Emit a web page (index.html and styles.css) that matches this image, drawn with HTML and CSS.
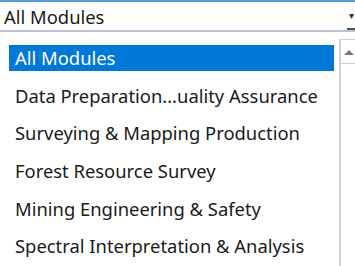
FILE: index.html
```html
<!DOCTYPE html>
<html lang="en">
  <head>
    <meta charset="UTF-8" />
    <title>Module select</title>
    <link rel="stylesheet" href="styles.css">
  </head>
  <body>
    <div class="combo">
      <span class="combo-text">All Modules</span>
      <span class="combo-arrow">&#9662;</span>
    </div>
    <div class="dropdown">
      <ul class="items">
        <li class="item selected"><span>All Modules</span></li>
        <li class="item"><span>Data Preparation...uality Assurance</span></li>
        <li class="item"><span>Surveying &amp; Mapping Production</span></li>
        <li class="item"><span>Forest Resource Survey</span></li>
        <li class="item"><span>Mining Engineering &amp; Safety</span></li>
        <li class="item"><span>Spectral Interpretation &amp; Analysis</span></li>
      </ul>
      <div class="scrollbar">
        <div class="scroll-up">
          <svg width="10" height="6" viewBox="0 0 10 6"><polygon points="0,6 5,1 10,6" fill="#7a7a7a" /></svg>
        </div>
      </div>
    </div>
  </body>
</html>
```

FILE: styles.css
```css
* {
  margin: 0;
  padding: 0;
  box-sizing: border-box;
}
body {
  width: 355px;
  height: 266px;
  overflow: hidden;
  background: #fff;
  font-family: "Noto Sans", "Open Sans", sans-serif;
  font-size: 18.4px;
  color: #1a1a1a;
}
ul {
  list-style: none;
}
.combo {
  height: 32px;
  border-top: 2px solid #5a9be0;
  border-bottom: 2px solid #b9c4d0;
  display: flex;
  align-items: center;
  justify-content: space-between;
  padding-left: 4px;
}
.combo-arrow {
  align-self: stretch;
  width: 8px;
  display: flex;
  align-items: center;
  justify-content: center;
  font-size: 10px;
  color: #333;
  border-bottom: 2px solid #555;
}
.dropdown {
  display: flex;
  height: 234px;
  padding-top: 7px;
}
.items {
  flex: 1;
  padding-left: 9px;
  padding-right: 5px;
}
.item {
  height: 37.6px;
  display: flex;
  align-items: center;
  white-space: nowrap;
}
.item span {
  display: flex;
  align-items: center;
  flex: 1;
  height: 26px;
  padding-left: 6px;
}
.item.selected span {
  background: #0078d7;
  color: #fff;
}
.scrollbar {
  width: 16px;
  border-left: 2px solid #cfcfcf;
  border-top: 1px solid #cfcfcf;
}
.scroll-up {
  height: 24px;
  border-bottom: 1px solid #cfcfcf;
  display: flex;
  align-items: center;
  justify-content: center;
  padding-left: 2px;
}
```
